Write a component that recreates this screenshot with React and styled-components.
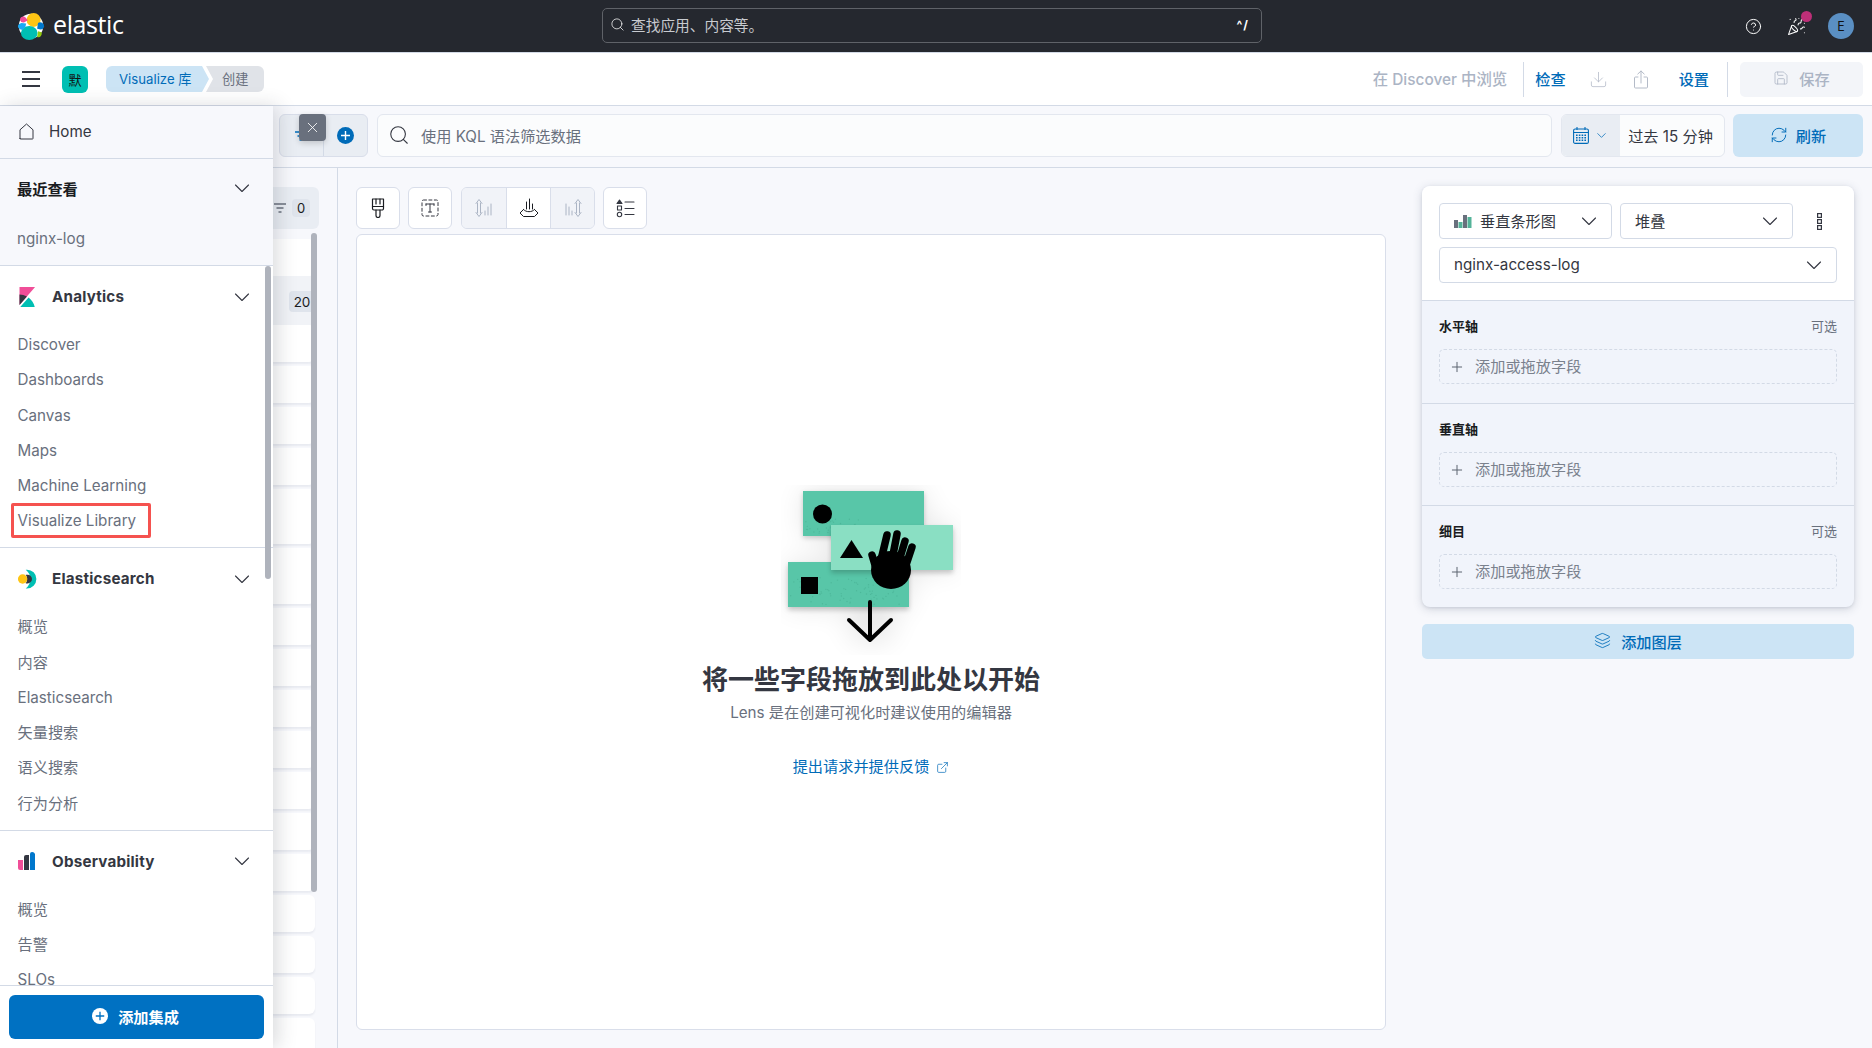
import React from 'react';
import styled, { createGlobalStyle } from 'styled-components';
import { Search, CircleHelp, PartyPopper, Download, Save, RefreshCw, Layers, ExternalLink, Plus, X, ChevronDown } from 'lucide-react';

const Global = createGlobalStyle`
  html, body { margin: 0; padding: 0; height: 100%; overflow: hidden; background: #f7f8fc; }
  *, *::before, *::after { box-sizing: border-box; }
  body { font-family: Inter, "Noto Sans CJK SC", "Noto Sans", sans-serif; font-size: 15.2px; color: #343741; }
`;

const Page = styled.div`position: relative; width: 1872px; height: 1048px; display: flex; flex-direction: column; overflow: hidden;`;

/* ---- top bar ---- */
const TopBar = styled.header`
  height: 53px; flex: none; background: #25282f; border-bottom: 1px solid #d3dae6;
  display: grid; grid-template-columns: 602px 660px 1fr; align-items: center;
`;
const Brand = styled.div`display: flex; align-items: center; gap: 8px; padding-left: 17px;`;
const BrandName = styled.span`color: #fff; font-family: "Open Sans", sans-serif; font-size: 25px; line-height: 1; letter-spacing: -0.4px; margin-top: -3px;`;
const GlobalSearch = styled.div`
  height: 35px; margin-top: -1px; border: 1px solid #5f6268; border-radius: 5px; display: flex; align-items: center; padding: 0 12px 2px 7px; gap: 6px; color: #c8cbd0; font-size: 14.7px;
`;
const Kbd = styled.span`margin-left: auto; color: #fff; font-size: 12px; font-weight: 700; letter-spacing: 1px;`;
const TopActions = styled.div`display: flex; align-items: center; justify-content: flex-end; padding-right: 15.5px; color: #fff;`;
const TopIcon = styled.span`position: relative; display: flex; width: ${p => p.$w}px; justify-content: center;`;
const Dot = styled.span`position: absolute; top: -6px; right: 14px; width: 11px; height: 11px; border-radius: 50%; background: #bd2f78;`;
const Avatar = styled.span`width: 26px; height: 26px; border-radius: 50%; background: #5a8fc3; color: #111; font-size: 12.5px; display: flex; align-items: center; justify-content: center;`;

/* ---- sub bar ---- */
const SubBar = styled.div`height: 53px; flex: none; background: #fff; border-bottom: 1px solid #d3dae6; display: flex; align-items: center; padding: 0 9px 0 22px;`;
const Burger = styled.span`
  width: 18px; height: 16px; border-top: 2px solid #343741; border-bottom: 2px solid #343741; position: relative; flex: none;
  &::after { content: ''; position: absolute; left: 0; right: 0; top: 5px; height: 2px; background: #343741; }
`;
const SpaceBadge = styled.span`width: 26px; height: 27px; margin-left: 22px; border-radius: 6px; background: #00bfb3; color: #111; font-size: 13px; display: flex; align-items: center; justify-content: center; flex: none;`;
const Crumbs = styled.nav`display: flex; margin-left: 18px;`;
const CrumbFirst = styled.span`
  height: 26px; width: 103px; padding: 0 0 2px 13px; background: #cce4f5; color: #006bb8; font-size: 13.2px; display: flex; align-items: center; border-radius: 6px 0 0 6px;
  clip-path: polygon(0 0, calc(100% - 7px) 0, 100% 50%, calc(100% - 7px) 100%, 0 100%);
`;
const CrumbLast = styled.span`
  height: 26px; width: 58px; margin-left: -3px; padding: 0 0 2px 16px; background: #e0e3e8; color: #69707d; font-size: 13.2px; display: flex; align-items: center; border-radius: 0 6px 6px 0;
  clip-path: polygon(0 0, 100% 0, 100% 100%, 0 100%, 7px 50%);
`;
const SubActions = styled.div`margin-left: auto; display: flex; align-items: center; height: 35px;`;
const SubLink = styled.span`color: ${p => p.$off ? '#abb4c4' : '#006bb8'}; font-weight: 500; font-size: ${p => p.$off ? 15.4 : 15.2}px; padding: 0 ${p => p.$r ?? 11}px 2px ${p => p.$l ?? 11}px; white-space: nowrap;`;
const SubDivider = styled.span`width: 1px; height: 35px; background: #d3dae6;`;
const SubIcon = styled.span`display: flex; width: 43px; justify-content: center; color: #b4bbc8;`;
const SaveButton = styled.span`width: 123px; height: 35px; background: #f3f5f9; border-radius: 5px; display: flex; align-items: center; justify-content: center; gap: 10px; color: #abb4c4; font-weight: 500; margin-left: 12px; padding-bottom: 2px;`;

/* ---- filter row ---- */
const FilterRow = styled.div`height: 62px; flex: none; border-bottom: 1px solid #d3dae6; background: #f7f8fc; display: flex; gap: 9px; padding: 8px 9px 0 279px;`;
const FilterGroup = styled.div`position: relative; width: 89px; height: 43px; background: #e9edf3; border: 1px solid #d9deea; border-radius: 6px; display: flex;`;
const FilterCell = styled.div`width: ${p => p.$w}px; display: flex; align-items: center; justify-content: center; border-right: ${p => p.$line ? '1px solid #d3dae6' : 'none'};`;
const CloseTip = styled.span`position: absolute; left: 19px; top: -1px; width: 27px; height: 27px; border-radius: 4px; background: #69707d; color: #fff; display: flex; align-items: center; justify-content: center; box-shadow: 0 2px 6px rgba(0,0,0,.18);`;
const QueryField = styled.div`flex: 1; height: 43px; background: #fbfcfd; border: 1px solid #e3e7ef; border-radius: 6px; display: flex; align-items: center; padding: 0 0 2px 10px; gap: 11px; color: #69707d; font-size: 15.2px;`;
const DateGroup = styled.div`width: 164px; height: 43px; border: 1px solid #e3e7ef; border-radius: 6px; background: #fbfcfd; display: flex; align-items: stretch; overflow: hidden; margin-right: -1px;`;
const DateIcon = styled.span`width: 58px; background: #e9edf3; display: flex; align-items: center; justify-content: center; gap: 5px; color: #006bb8; flex: none;`;
const DateText = styled.span`flex: 1; display: flex; align-items: center; justify-content: center; font-size: 15.2px; padding: 0 3px 1px 0;`;
const RefreshBtn = styled.span`width: 130px; height: 43px; background: #cce4f5; border-radius: 6px; display: flex; align-items: center; justify-content: center; gap: 8px; color: #006bb8; font-weight: 500; padding-bottom: 2px;`;

/* ---- workspace ---- */
const Workspace = styled.main`flex: 1; min-height: 0; display: flex;`;
const Sidebar = styled.aside`position: relative; width: 338px; flex: none; border-right: 1px solid #d3dae6; padding: 19px 0 0 8px; overflow: hidden;`;
const FieldFilter = styled.div`width: 311px; height: 42px; background: #e9edf3; border-radius: 6px; margin-bottom: 10px; display: flex; align-items: center; justify-content: flex-end; padding-right: 9px; gap: 6px;`;
const Count = styled.span`min-width: 18px; height: 18px; padding: 0 4px; background: #dfe4ec; border-radius: 4px; font-size: 13px; display: flex; align-items: center; justify-content: center; color: #1a1c21;`;
const FieldRow = styled.div`width: 307px; height: ${p => p.$h}px; background: #fff; border-radius: 0 6px 6px 0; margin-bottom: ${p => p.$flush ? 0 : 4}px; box-shadow: ${p => p.$flush ? 'none' : '0 2px 2px rgba(60,70,100,.07)'};`;
const FieldGroupRow = styled.div`width: 307px; height: 49px; background: #f1f3f7; display: flex; align-items: center; justify-content: flex-end; font-size: 14px; color: #1a1c21; padding-top: 2px;`;
const GroupCount = styled.span`width: 26px; height: 21px; background: #dfe4ec; border-radius: 4px; display: flex; align-items: center; justify-content: center; font-size: 13.5px;`;
const ListThumb = styled.span`position: absolute; left: 311px; top: 65px; width: 6px; height: 659px; border-radius: 3px; background: #afb3bc;`;

const CanvasArea = styled.section`flex: 1; min-width: 0; padding: 19px 18px 18px 18px; display: flex; flex-direction: column; gap: 5px;`;
const Tools = styled.div`display: flex; gap: 8px; height: 42px; flex: none;`;
const ToolBtn = styled.span`width: 44px; height: 42px; background: #fff; border: 1px solid #d9deea; border-radius: 6px; display: flex; align-items: center; justify-content: center;`;
const ToolGroup = styled.div`display: flex; height: 42px; border: 1px solid #d9deea; border-radius: 6px; overflow: hidden; margin-left: 1px;`;
const ToolSeg = styled.span`width: 44px; display: flex; align-items: center; justify-content: center; background: ${p => p.$on ? '#fff' : '#f1f3f8'}; & + & { border-left: 1px solid #d9deea; }`;
const CanvasCard = styled.div`flex: 1; background: #fff; border: 1px solid #d9deea; border-radius: 6px; display: flex; flex-direction: column; align-items: center; padding-top: 250px;`;
const EmptyTitle = styled.h2`margin: 9px 0 0; font-size: 26px; line-height: 32px; font-weight: 700; color: #343741;`;
const EmptyText = styled.p`margin: 5px 0 0; font-size: 15.2px; line-height: 24px; color: #69707d;`;
const EmptyLink = styled.a`margin-top: 30px; font-size: 15.2px; line-height: 24px; color: #006bb8; display: flex; align-items: center; gap: 7px;`;

/* ---- config ---- */
const Config = styled.aside`width: 468px; flex: none; padding: 18px 18px 0 18px;`;
const ConfigCard = styled.div`border-radius: 8px; overflow: hidden; background: #f1f4fb; box-shadow: 0 2px 10px rgba(70,80,110,.22), 0 1px 3px rgba(70,80,110,.12);`;
const ConfigHead = styled.div`background: #fff; padding: 17px 17px 17px; display: flex; flex-direction: column; gap: 8px; border-bottom: 1px solid #d3dae6;`;
const SelectRow = styled.div`display: flex; gap: 8px; align-items: center;`;
const SelectBox = styled.div`flex: ${p => p.$w ? 'none' : 1}; width: ${p => p.$w ? `${p.$w}px` : 'auto'}; height: 36px; background: #fff; border: 1px solid #d3dae6; border-radius: 4px; display: flex; align-items: center; padding: 0 14px 0 14px; font-size: 15.2px; color: #343741; gap: 8px;`;
const SelectText = styled.span`padding-bottom: ${p => p.$latin ? 1 : 3}px;`;
const Chevron = styled.span`margin-left: auto; display: flex; color: #343741;`;
const DotsBtn = styled.span`width: 43px; display: flex; justify-content: center;`;
const AxisSection = styled.div`padding: 14px 17px 17px; height: 102px; & + & { border-top: 1px solid #d3dae6; }`;
const AxisHead = styled.div`display: flex; justify-content: space-between; align-items: center; height: 20px; margin-bottom: 14px; font-size: 13px;`;
const AxisLabel = styled.span`font-weight: 700; color: #1a1c21;`;
const AxisOptional = styled.span`color: #69707d;`;
const DropZone = styled.div`height: 35px; border: 1px dashed #d3dae6; border-radius: 5px; display: flex; align-items: center; padding: 0 0 3px 9px; gap: 10px; color: #7a818d; font-size: 15.2px;`;
const DropPlus = styled.span`display: flex; margin-top: 3px;`;
const AddLayer = styled.div`height: 35px; margin-top: 17px; background: #cce4f5; border-radius: 5px; color: #006bb8; display: flex; align-items: center; justify-content: center; gap: 10px; font-weight: 500; padding-bottom: 2px;`;

/* ---- nav flyout ---- */
const Nav = styled.nav`position: absolute; left: 0; top: 106px; bottom: 0; width: 273px; background: #fff; box-shadow: 5px 0 18px rgba(40,45,60,.17); display: flex; flex-direction: column; z-index: 5;`;
const NavHome = styled.div`height: 53px; flex: none; background: #f7f8fc; border-bottom: 1px solid #d3dae6; display: flex; align-items: center; gap: 15px; padding: 0 0 2px 19px; color: #343741;`;
const NavRecent = styled.div`height: 107px; flex: none; background: #f7f8fc; border-bottom: 1px solid #d3dae6; padding: 0 17px;`;
const RecentHead = styled.div`height: 60px; display: flex; align-items: center; justify-content: space-between; font-weight: 700; color: #1a1c21; padding-right: 6px; margin-top: -1px;`;
const RecentItem = styled.div`color: #69707d; line-height: 35px; margin-top: 3px;`;
const NavScroll = styled.div`position: relative; flex: 1; min-height: 0; overflow: hidden;`;
const NavThumb = styled.span`position: absolute; right: 2px; top: 0; width: 6px; height: 313px; border-radius: 3px; background: #afb3bc;`;
const NavSection = styled.section`padding-bottom: 8.5px; border-bottom: 1px solid #d3dae6;`;
const SectionHead = styled.div`height: 61px; display: flex; align-items: center; padding: 0 23px 0 17px; gap: 15px; font-weight: 700; letter-spacing: .2px; color: #343741;`;
const NavChevron = styled.span`margin-left: auto; display: flex;`;
const NavItem = styled.div`
  position: relative; height: 35.3px; line-height: 35.3px; padding-left: 17.5px; color: #69707d;
  ${p => p.$marked && `&::after { content: ''; position: absolute; left: 11px; top: 0; width: 140px; height: 35px; border: 3px solid #f5524f; border-radius: 2px; }`}
`;
const NavFoot = styled.div`height: 63px; flex: none; background: #fff; border-top: 1px solid #d3dae6; padding: 9px;`;
const AddIntegration = styled.div`height: 44px; background: #0071c2; border-radius: 6px; display: flex; align-items: center; justify-content: center; gap: 10px; color: #fff; font-weight: 600; padding: 0 2px 3px 0;`;

/* ---- drawings ---- */
const thin = { fill: 'none', stroke: 'currentColor', strokeWidth: 1, strokeLinecap: 'round', strokeLinejoin: 'round' };

const ElasticLogo = () => (
  <svg width="28" height="28" viewBox="0 0 32 32">
    <circle cx="16" cy="16" r="14" fill="#fff" />
    <ellipse cx="19" cy="9" rx="8" ry="8" fill="#fec514" />
    <ellipse cx="14" cy="24" rx="9.5" ry="8" fill="#00bfb3" />
    <path d="M3.5 9.5a3.8 3.8 0 0 1 7-2.5l2 2.5-4.5 2.5a4 4 0 0 1-4.5-2.500z" fill="#f04e98" />
    <path d="M1 16a4.500 4.500 0 0 1 4-3.500l5.500.5-1 4.500-2.500 2.500A4.500 4.500 0 0 1 1 16z" fill="#1ba9f5" />
    <path d="M23 19l1-6.500a4.500 4.500 0 0 1 7 4 4.500 4.500 0 0 1-4 3.500z" fill="#0077cc" />
    <path d="M24 22l4 1a4 4 0 0 1-5 5.500z" fill="#93c90e" />
  </svg>
);
const HomeIcon = () => (
  <svg width="15" height="17" viewBox="0 0 15 17"><path d="M1 15.500V6.800L7.500 1 14 6.800v8.700a.5.5 0 0 1-.5.5h-12a.5.5 0 0 1-.5-.5z" {...thin} stroke="#343741" /></svg>
);
const ThinChevron = ({ size = 16, color = '#343741' }) => (
  <svg width={size} height={size} viewBox="0 0 16 16"><path d="M1.500 5l6.500 6.500L14.500 5" fill="none" stroke={color} strokeWidth="1.100" strokeLinecap="round" strokeLinejoin="round" /></svg>
);
const KibanaLogo = () => (
  <svg width="20" height="20" viewBox="0 0 32 32">
    <path fill="#f04e98" d="M4 0v28.789L28.935.017z" />
    <path fill="#343741" d="M4 12v16.789l11.906-13.738A24.721 24.721 0 0 0 4 12" />
    <path fill="#00bfb3" d="M18.479 16.664L6.268 30.754l-1.073 1.237h23.191c-1.252-6.292-4.883-11.719-9.908-15.327" />
  </svg>
);
const SearchLogo = () => (
  <svg width="20" height="20" viewBox="0 0 32 32">
    <path fill="#00bfb3" d="M14 1h2a15 15 0 0 1 0 30h-2a19 19 0 0 0 0-30z" />
    <path fill="#343741" d="M14 9h3a7 7 0 0 1 0 14h-3a13 13 0 0 0 0-14z" />
    <circle cx="9" cy="16" r="7.500" fill="#fec514" />
  </svg>
);
const ObsLogo = () => (
  <svg width="20" height="20" viewBox="0 0 20 20">
    <path fill="#f04e98" d="M1 9h5v10H3a2 2 0 0 1-2-2z" />
    <path fill="#343741" d="M7 6a2 2 0 0 1 2-2h3v15H7z" />
    <path fill="#0077cc" d="M13 3a2 2 0 0 1 2-2 3 3 0 0 1 3 2v16h-5z" />
  </svg>
);
const Brush = () => (
  <svg width="14" height="20" viewBox="0 0 14 20"><g {...thin} stroke="#1a1c21" strokeWidth="1.200"><path d="M1.500 1h11v9.500a1.500 1.500 0 0 1-1.500 1.500H3a1.500 1.500 0 0 1-1.500-1.500z" /><path d="M1.500 8.500h11M5 1v5M9 1v5" /><path d="M5 12v5.500a2 2 0 0 0 4 0V12" /></g></svg>
);
const TextBox = () => (
  <svg width="18" height="18" viewBox="0 0 18 18"><g {...thin} stroke="#343741"><rect x="1" y="1" width="16" height="16" rx="1.500" strokeDasharray="3 2.400" /><path d="M5 5h8M9 5v8M7.500 13h3M5 5v1.500M13 5v1.500" /></g></svg>
);
const AxisLeft = ({ flip }) => (
  <svg width="20" height="20" viewBox="0 0 20 20" style={flip ? { transform: 'scaleX(-1)' } : undefined}><g {...thin} stroke="#abb4c4"><path d="M3.500 5v10M6.500 5v10M2 5.500L5 1.500l3 4M2 14.500l3 4 3-4" /><path d="M11 17v-4M14 17V9M17 17V6" /></g></svg>
);
const AxisBottom = () => (
  <svg width="20" height="20" viewBox="0 0 20 20"><g {...thin} stroke="#1a1c21"><path d="M7.500 11V4M10.500 11V1M13.500 11V6" /><path d="M4.500 11.500L1 15l3.500 3.500h11L19 15l-3.500-3.500M4.500 11.500C7 14.500 13 14.500 15.500 11.500" /></g></svg>
);
const LegendIcon = () => (
  <svg width="19" height="19" viewBox="0 0 19 19"><g {...thin} stroke="#343741" strokeWidth="1.100"><path d="M3.500 1L6 4.500H1z" fill="#343741" /><rect x="1.500" y="7" width="4" height="4" /><circle cx="3.500" cy="15.500" r="2.200" /><path d="M9 3h9M9 9.500h9M9 15.500h9" /></g></svg>
);
const FilterIcon = ({ color = '#69707d' }) => (
  <svg width="12" height="10" viewBox="0 0 12 10"><path d="M0 1h12M2.500 5h7M4.500 9h3" stroke={color} strokeWidth="1.300" /></svg>
);
const PlusCircle = ({ size = 17, bg = '#006bb8', fg = '#fff' }) => (
  <svg width={size} height={size} viewBox="0 0 17 17"><circle cx="8.500" cy="8.500" r="8.500" fill={bg} /><path d="M8.500 4v9M4 8.500h9" stroke={fg} strokeWidth="1.400" /></svg>
);
const ShareIcon = () => (
  <svg width="16" height="19" viewBox="0 0 16 19"><g {...thin}><path d="M5 7H2.500a1 1 0 0 0-1 1v9a1 1 0 0 0 1 1h11a1 1 0 0 0 1-1V8a1 1 0 0 0-1-1H11" /><path d="M8 13V1M4.800 4L8 1l3.200 3" /></g></svg>
);
const CalendarIcon = () => (
  <svg width="16" height="17" viewBox="0 0 16 17"><g fill="none" stroke="currentColor" strokeWidth="1.100"><rect x=".6" y="2" width="14.800" height="14.400" rx="1.500" /><path d="M.6 5.500h14.800M4 0v3M12 0v3" /></g><g fill="currentColor">{[7.5, 10, 12.5].map(y => [3, 5.8, 8.6, 11.4].map(x => <rect key={`${x}-${y}`} x={x} y={y} width="1.600" height="1.500" />))}</g></svg>
);
const BarsIcon = () => (
  <svg width="18" height="14" viewBox="0 0 18 14"><rect x="0" y="6" width="4" height="8" fill="#69707d" /><rect x="4.500" y="8" width="4" height="6" fill="#54b399" /><rect x="9" y="1" width="4" height="13" fill="#69707d" /><rect x="13.500" y="3" width="4" height="11" fill="#54b399" /></svg>
);
const DotsIcon = () => (
  <svg width="5" height="17" viewBox="0 0 5 17"><g fill="none" stroke="#343741" strokeWidth="1.200"><rect x=".6" y=".6" width="3.800" height="3.800" /><rect x=".6" y="6.600" width="3.800" height="3.800" /><rect x=".6" y="12.600" width="3.800" height="3.800" /></g></svg>
);

const noise = n => { const s = Math.sin(n * 127.1) * 43758.5453; return s - Math.floor(s); };
const speckles = Array.from({ length: 110 }, (_, i) => {
  const a = noise(i + 1), b = noise(i + 501), upper = i % 3 === 0;
  return upper
    ? { x: 24 + a * 60, y: 34 + b * 16 }
    : { x: 9 + a * 110, y: 92 + b * 29 };
});
const Illustration = () => (
  <svg width="180" height="170" viewBox="0 0 180 170">
    <defs>
      <filter id="soft" x="-30%" y="-30%" width="160%" height="160%"><feGaussianBlur stdDeviation="14" /></filter>
      <filter id="tight" x="-10%" y="-20%" width="120%" height="150%"><feGaussianBlur stdDeviation="2.500" /></filter>
    </defs>
    <g filter="url(#soft)" fill="#000" opacity=".1">
      <rect x="22" y="6" width="121" height="45" /><rect x="50" y="40" width="122" height="45" /><rect x="7" y="77" width="121" height="45" /><rect x="70" y="125" width="40" height="30" />
    </g>
    <rect x="22" y="8" width="121" height="45" fill="#000" opacity=".18" filter="url(#tight)" />
    <rect x="22" y="6" width="121" height="45" fill="#58c6a8" />
    <rect x="7" y="80" width="121" height="45" fill="#000" opacity=".2" filter="url(#tight)" />
    <rect x="7" y="77" width="121" height="45" fill="#58c6a8" />
    <g fill="#46ad90" opacity=".55">{speckles.map((s, i) => <circle key={i} cx={s.x} cy={s.y} r=".7" />)}</g>
    <rect x="50" y="43" width="122" height="45" fill="#000" opacity=".2" filter="url(#tight)" />
    <rect x="50" y="40" width="122" height="45" fill="#8adfc3" />
    <circle cx="41.500" cy="29" r="9.500" fill="#000" />
    <path d="M59 73L70.500 55 82 73z" fill="#000" />
    <rect x="20" y="92" width="17" height="17" fill="#000" />
    <g stroke="#000" strokeWidth="7.500" strokeLinecap="round" fill="none">
      <path d="M91 70L97 90M106 50L100 75M116 49L111 75M124 56L118 76M131 62L123 86" />
    </g>
    <ellipse cx="110" cy="85" rx="20" ry="19" fill="#000" />
    <g stroke="#000" strokeWidth="4" strokeLinecap="round" strokeLinejoin="round" fill="none">
      <path d="M89 117v38M68 135l21 20 21-20" />
    </g>
  </svg>
);

const FIELD_ROWS = [37, 37, 37, 37, 55, 56, 37, 37, 37, 37, 37, 37, 37, 37, 37, 37, 37];

const Section = ({ logo, title, items, marked }) => (
  <NavSection>
    <SectionHead>{logo}<span>{title}</span><NavChevron><ThinChevron /></NavChevron></SectionHead>
    {items.map(t => <NavItem key={t} $marked={t === marked}>{t}</NavItem>)}
  </NavSection>
);

const Axis = ({ label, optional }) => (
  <AxisSection>
    <AxisHead><AxisLabel>{label}</AxisLabel>{optional && <AxisOptional>可选</AxisOptional>}</AxisHead>
    <DropZone><DropPlus><Plus size={16} strokeWidth={1.5} color="#5d6470" /></DropPlus>添加或拖放字段</DropZone>
  </AxisSection>
);

export default function App() {
  return (
    <Page>
      <Global />
      <TopBar>
        <Brand><ElasticLogo /><BrandName>elastic</BrandName></Brand>
        <GlobalSearch><Search size={15} strokeWidth={1.2} color="#fff" />查找应用、内容等。<Kbd>^/</Kbd></GlobalSearch>
        <TopActions>
          <TopIcon $w={27}><CircleHelp size={17} strokeWidth={1.4} /></TopIcon>
          <TopIcon $w={59}><PartyPopper size={19} strokeWidth={1.3} /><Dot /></TopIcon>
          <TopIcon $w={31}><Avatar>E</Avatar></TopIcon>
        </TopActions>
      </TopBar>

      <SubBar>
        <Burger />
        <SpaceBadge>默</SpaceBadge>
        <Crumbs><CrumbFirst>Visualize 库</CrumbFirst><CrumbLast>创建</CrumbLast></Crumbs>
        <SubActions>
          <SubLink $off $l={16} $r={16}>在 Discover 中浏览</SubLink>
          <SubDivider />
          <SubLink>检查</SubLink>
          <SubIcon><Download size={19} strokeWidth={1} /></SubIcon>
          <SubIcon><ShareIcon /></SubIcon>
          <SubLink $l={16} $r={18}>设置</SubLink>
          <SubDivider />
          <SaveButton><Save size={16} strokeWidth={1.2} />保存</SaveButton>
        </SubActions>
      </SubBar>

      <FilterRow>
        <FilterGroup>
          <FilterCell $w={44} $line><FilterIcon color="#0071c2" /></FilterCell>
          <FilterCell $w={44}><PlusCircle /></FilterCell>
          <CloseTip><X size={17} strokeWidth={1.2} /></CloseTip>
        </FilterGroup>
        <QueryField><Search size={22} strokeWidth={1.2} color="#343741" />使用 KQL 语法筛选数据</QueryField>
        <DateGroup>
          <DateIcon><CalendarIcon /><ChevronDown size={15} strokeWidth={1.2} /></DateIcon>
          <DateText>过去 15 分钟</DateText>
        </DateGroup>
        <RefreshBtn><RefreshCw size={18} strokeWidth={1.3} />刷新</RefreshBtn>
      </FilterRow>

      <Workspace>
        <Sidebar>
          <FieldFilter><FilterIcon /><Count>0</Count></FieldFilter>
          <FieldRow $h={37} $flush />
          <FieldGroupRow><GroupCount>20</GroupCount></FieldGroupRow>
          {FIELD_ROWS.map((h, i) => <FieldRow key={i} $h={h} />)}
          <ListThumb />
        </Sidebar>

        <CanvasArea>
          <Tools>
            <ToolBtn><Brush /></ToolBtn>
            <ToolBtn><TextBox /></ToolBtn>
            <ToolGroup>
              <ToolSeg><AxisLeft /></ToolSeg>
              <ToolSeg $on><AxisBottom /></ToolSeg>
              <ToolSeg><AxisLeft flip /></ToolSeg>
            </ToolGroup>
            <ToolBtn><LegendIcon /></ToolBtn>
          </Tools>
          <CanvasCard>
            <Illustration />
            <EmptyTitle>将一些字段拖放到此处以开始</EmptyTitle>
            <EmptyText>Lens 是在创建可视化时建议使用的编辑器</EmptyText>
            <EmptyLink>提出请求并提供反馈<ExternalLink size={13} strokeWidth={1.3} /></EmptyLink>
          </CanvasCard>
        </CanvasArea>

        <Config>
          <ConfigCard>
            <ConfigHead>
              <SelectRow>
                <SelectBox $w={173}><BarsIcon /><SelectText>垂直条形图</SelectText><Chevron><ThinChevron /></Chevron></SelectBox>
                <SelectBox $w={173}><SelectText>堆叠</SelectText><Chevron><ThinChevron /></Chevron></SelectBox>
                <DotsBtn><DotsIcon /></DotsBtn>
              </SelectRow>
              <SelectRow>
                <SelectBox><SelectText $latin>nginx-access-log</SelectText><Chevron><ThinChevron /></Chevron></SelectBox>
              </SelectRow>
            </ConfigHead>
            <Axis label="水平轴" optional />
            <Axis label="垂直轴" />
            <Axis label="细目" optional />
          </ConfigCard>
          <AddLayer><Layers size={17} strokeWidth={1.2} />添加图层</AddLayer>
        </Config>
      </Workspace>

      <Nav>
        <NavHome><HomeIcon />Home</NavHome>
        <NavRecent>
          <RecentHead>最近查看<ThinChevron /></RecentHead>
          <RecentItem>nginx-log</RecentItem>
        </NavRecent>
        <NavScroll>
          <Section logo={<KibanaLogo />} title="Analytics" items={['Discover', 'Dashboards', 'Canvas', 'Maps', 'Machine Learning', 'Visualize Library']} marked="Visualize Library" />
          <Section logo={<SearchLogo />} title="Elasticsearch" items={['概览', '内容', 'Elasticsearch', '矢量搜索', '语义搜索', '行为分析']} />
          <Section logo={<ObsLogo />} title="Observability" items={['概览', '告警', 'SLOs']} />
          <NavThumb />
        </NavScroll>
        <NavFoot><AddIntegration><PlusCircle size={16} bg="#fff" fg="#0071c2" />添加集成</AddIntegration></NavFoot>
      </Nav>
    </Page>
  );
}
